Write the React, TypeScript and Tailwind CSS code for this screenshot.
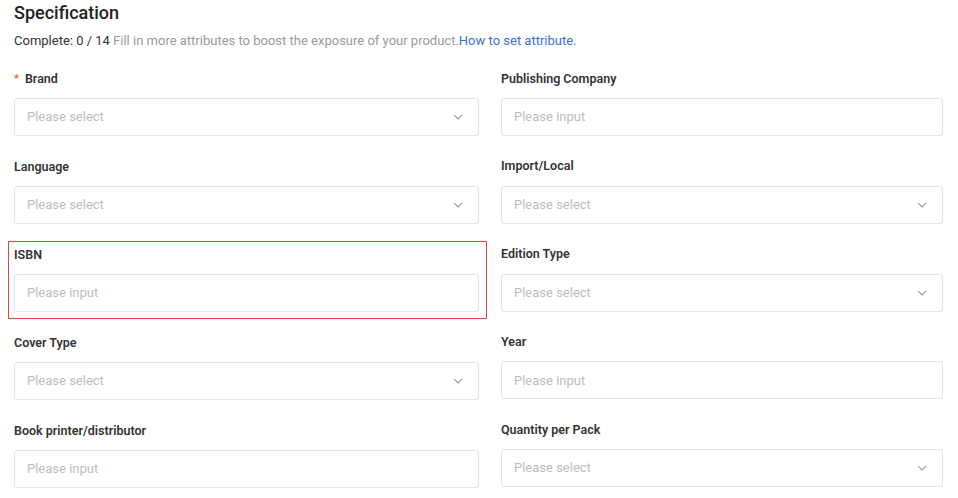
import React from "react";

const Chevron = () => (
  <svg width="12" height="12" viewBox="0 0 12 12" fill="none" stroke="#999" strokeWidth="1.1">
    <path d="M2 4.2l4 3.8 4-3.8" />
  </svg>
);

function Field({ label, kind, req, hl }: { label: string; kind: "select" | "input"; req?: boolean; hl?: boolean }) {
  return (
    <div className="relative flex flex-col">
      {hl && <div className="absolute -left-[6px] -right-[8px] -top-[4px] -bottom-[7px] border border-[#e0483b]" />}
      <div className="h-[20px] flex items-center text-[12.5px] font-semibold text-[#333]">
        {req && <span className="text-[#f05a28] mr-[6px] text-[11px]">*</span>}
        {label}
      </div>
      <div className="mt-[9px] h-[38px] border border-[#e3e3e3] rounded-[3px] bg-white flex items-center justify-between pl-[12px] pr-[14px] text-[13px] text-[#bdbdbd]">
        <span>{kind === "select" ? "Please select" : "Please input"}</span>
        {kind === "select" && <Chevron />}
      </div>
    </div>
  );
}

export default function App() {
  return (
    <div className="w-[958px] h-[498px] bg-white overflow-hidden px-[14px] pt-[2px]" style={{ fontFamily: "Roboto, 'Liberation Sans', sans-serif" }}>
      <div className="text-[18px] font-medium text-[#222] leading-[22px]">Specification</div>
      <div className="mt-[9px] text-[13px] leading-[16px]">
        <span className="text-[#333]">Complete: 0 / 14 </span>
        <span className="text-[#9a9a9a]">Fill in more attributes to boost the exposure of your product.</span>
        <span className="text-[#3c6fe0]">How to set attribute.</span>
      </div>
      <div className="mt-[20px] flex gap-[22px]">
        <div className="w-[465px] flex flex-col gap-[21px]">
          <Field label="Brand" kind="select" req />
          <Field label="Language" kind="select" />
          <Field label="ISBN" kind="input" hl />
          <Field label="Cover Type" kind="select" />
          <Field label="Book printer/distributor" kind="input" />
        </div>
        <div className="w-[442px] flex flex-col gap-[20.75px]">
          <Field label="Publishing Company" kind="input" />
          <Field label="Import/Local" kind="select" />
          <Field label="Edition Type" kind="select" />
          <Field label="Year" kind="input" />
          <Field label="Quantity per Pack" kind="select" />
        </div>
      </div>
    </div>
  );
}
